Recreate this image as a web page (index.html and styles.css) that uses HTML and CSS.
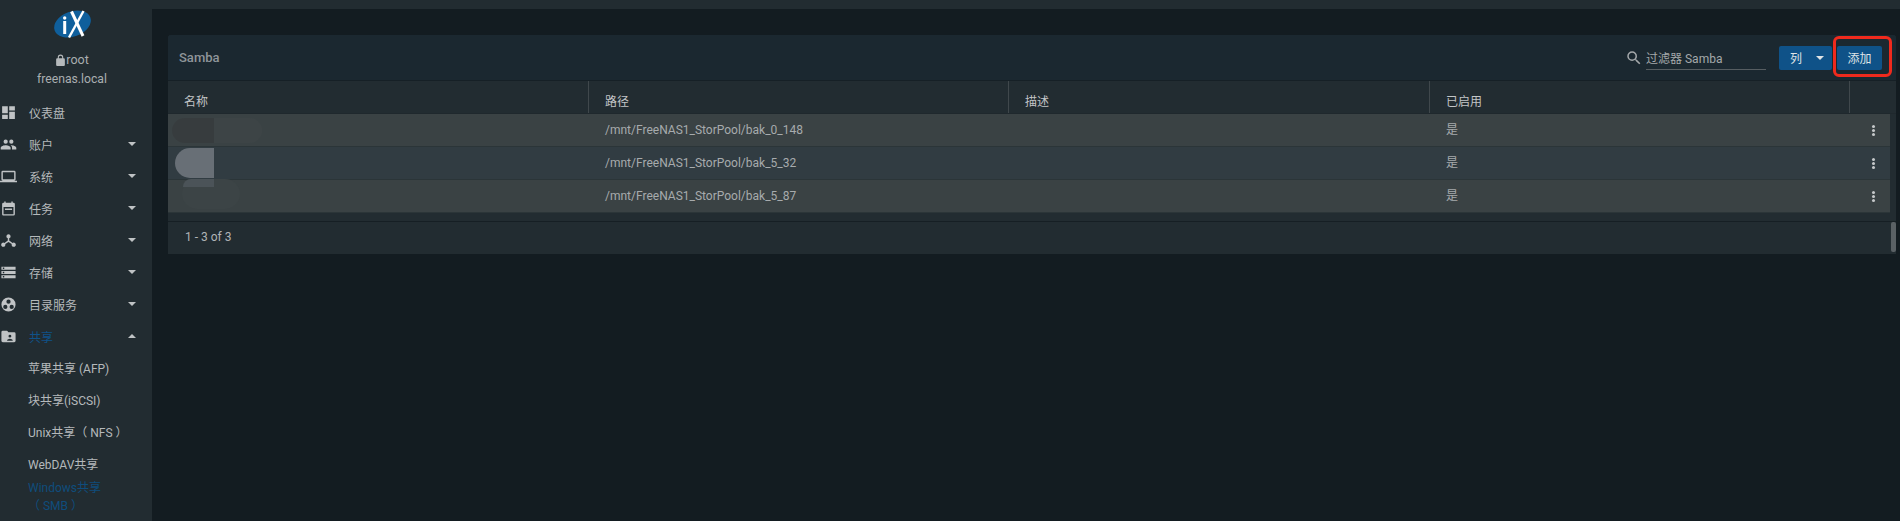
FILE: index.html
```html
<!DOCTYPE html>
<html lang="zh">
<head>
<meta charset="utf-8">
<title>Samba</title>
<link rel="stylesheet" href="styles.css">
</head>
<body>
<div class="app">
  <aside class="sidebar">
    <div class="brand">
      <svg class="logo" viewBox="0 0 37 28" width="37" height="28"><ellipse cx="18.500" cy="14" rx="19" ry="12.500" transform="rotate(-20 18.500 14)" fill="#0f5f9c"/><line x1="17.500" y1="1.500" x2="29" y2="26" stroke="#fff" stroke-width="3"/><line x1="29.500" y1="1" x2="15" y2="27.500" stroke="#fff" stroke-width="2.400"/><rect x="9.200" y="11" width="3" height="13" fill="#fff"/><circle cx="10.700" cy="8" r="1.700" fill="#fff"/></svg>
      <div class="user"><svg viewBox="2 0 20 22" width="11" height="12"><path d="M18 8h-1V6a5 5 0 0 0-10 0v2H6a2 2 0 0 0-2 2v10a2 2 0 0 0 2 2h12a2 2 0 0 0 2-2V10a2 2 0 0 0-2-2zM9 6a3 3 0 0 1 6 0v2H9z" fill="#b5b9bb"/></svg><span>root</span></div>
      <div class="host">freenas.local</div>
    </div>
    <nav class="nav">
      <div class="nav-item"><svg viewBox="0 0 24 24" class="ico"><path d="M3 13h8V3H3zm0 8h8v-6H3zm10 0h8V11h-8zm0-18v6h8V3z"/></svg><span class="label">仪表盘</span></div>
      <div class="nav-item"><svg viewBox="0 0 24 24" class="ico"><path d="M16 11a3 3 0 1 0 0-6 3 3 0 0 0 0 6zm-8 0a3 3 0 1 0 0-6 3 3 0 0 0 0 6zm0 2c-2.300 0-7 1.200-7 3.500V19h14v-2.500C15 14.200 10.300 13 8 13zm8 0h-1c1.200.8 2 2 2 3.500V19h6v-2.500c0-2.300-4.700-3.500-7-3.500z"/></svg><span class="label">账户</span><i class="caret"></i></div>
      <div class="nav-item"><svg viewBox="0 0 24 24" class="ico"><path d="M20 18a2 2 0 0 0 2-2V6a2 2 0 0 0-2-2H4a2 2 0 0 0-2 2v10c0 1.100.9 2 2 2H0v2h24v-2zM4 6h16v10H4z"/></svg><span class="label">系统</span><i class="caret"></i></div>
      <div class="nav-item"><svg viewBox="0 0 24 24" class="ico"><path d="M19 4h-1V2h-2v2H8V2H6v2H5a2 2 0 0 0-2 2v14c0 1.100.9 2 2 2h14a2 2 0 0 0 2-2V6a2 2 0 0 0-2-2zm0 16H5V10h14zM7 12h10v2H7z"/></svg><span class="label">任务</span><i class="caret"></i></div>
      <div class="nav-item"><svg viewBox="0 0 24 24" class="ico"><path d="M12 3a3 3 0 0 0-1 5.830V12l-4.700 3.500a3 3 0 1 0 1.200 1.600L12 14l4.500 3.100a3 3 0 1 0 1.200-1.600L13 12V8.830A3 3 0 0 0 12 3z"/></svg><span class="label">网络</span><i class="caret"></i></div>
      <div class="nav-item"><svg viewBox="0 0 24 24" class="ico"><path fill-rule="evenodd" d="M2 20h20v-4H2zm2-3h2v2H4zM2 4v4h20V4zm2 1h2v2H4zM2 14h20v-4H2zm2-3h2v2H4z"/></svg><span class="label">存储</span><i class="caret"></i></div>
      <div class="nav-item"><svg viewBox="0 0 24 24" class="ico"><path fill-rule="evenodd" d="M12 2a10 10 0 1 0 0 20 10 10 0 0 0 0-20zM12 5a3 3 0 1 1 0 6 3 3 0 0 1 0-6zM7.500 12.500a3 3 0 1 1 0 6 3 3 0 0 1 0-6zm9 0a3 3 0 1 1 0 6 3 3 0 0 1 0-6z"/></svg><span class="label">目录服务</span><i class="caret"></i></div>
      <div class="nav-item active"><svg viewBox="0 0 24 24" class="ico"><path fill-rule="evenodd" d="M20 6h-8l-2-2H4a2 2 0 0 0-2 2v12c0 1.100.9 2 2 2h16a2 2 0 0 0 2-2V8a2 2 0 0 0-2-2zM14 9.500a2 2 0 1 1 0 4 2 2 0 0 1 0-4zM10 17.500c0-1.500 2.600-2.500 4-2.500s4 1 4 2.500V18h-8z"/></svg><span class="label">共享</span><i class="caret up"></i></div>
      <div class="sub">苹果共享 (AFP)</div>
      <div class="sub">块共享(iSCSI)</div>
      <div class="sub">Unix共享（ NFS ）</div>
      <div class="sub">WebDAV共享</div>
      <div class="sub current">Windows共享（ SMB ）</div>
    </nav>
  </aside>
  <main class="main">
    <div class="topbar"></div>
    <section class="card">
      <header class="card-head">
        <span class="title">Samba</span>
        <div class="tools">
          <svg viewBox="0 0 24 24" class="search"><path d="M15.500 14h-.79l-.28-.27A6.470 6.470 0 0 0 16 9.500 6.500 6.500 0 1 0 9.500 16c1.610 0 3.090-.59 4.230-1.570l.27.28v.79l5 4.990L20.490 19l-4.990-5zm-6 0C7.010 14 5 11.990 5 9.500S7.010 5 9.500 5 14 7.010 14 9.500 11.990 14 9.500 14z"/></svg>
          <div class="filter">过滤器 Samba</div>
          <div class="btn btn-col"><span>列</span><i class="caret"></i></div>
          <div class="btn btn-add">添加</div>
        </div>
      </header>
      <div class="table">
        <div class="row head"><div class="cell c1">名称</div><div class="cell c2">路径</div><div class="cell c3">描述</div><div class="cell c4">已启用</div><div class="cell c5"></div></div>
        <div class="row data odd"><div class="cell c1"></div><div class="cell c2">/mnt/FreeNAS1_StorPool/bak_0_148</div><div class="cell c3"></div><div class="cell c4">是</div><div class="cell c5"><i class="dots"></i></div></div>
        <div class="row data even"><div class="cell c1"></div><div class="cell c2">/mnt/FreeNAS1_StorPool/bak_5_32</div><div class="cell c3"></div><div class="cell c4">是</div><div class="cell c5"><i class="dots"></i></div></div>
        <div class="row data odd"><div class="cell c1"></div><div class="cell c2">/mnt/FreeNAS1_StorPool/bak_5_87</div><div class="cell c3"></div><div class="cell c4">是</div><div class="cell c5"><i class="dots"></i></div></div>
        <i class="smear s1"></i><i class="smear s4"></i><i class="smear s2"></i><i class="smear s3"></i>
      </div>
      <footer class="card-foot">1 - 3 of 3</footer>
      <i class="thumb"></i>
    </section>
  </main>
</div>
</body>
</html>
```
FILE: styles.css
```css
* { box-sizing: border-box; }
html, body { margin: 0; height: 100%; overflow: hidden; }
body { font-family: Roboto, "Noto Sans CJK SC", sans-serif; font-size: 12px; color: #b5b9bb; background: #131c21; }
.app { display: flex; height: 521px; }
.sidebar { width: 152px; flex: none; background: #222c31; overflow: hidden; }
.brand { display: flex; flex-direction: column; align-items: center; width: 144px; padding-top: 10px; }
.logo { display: block; margin-bottom: 13px; overflow: visible; }
.user { display: flex; align-items: flex-end; height: 18px; line-height: 18px; font-size: 12.500px; color: #a9aeb0; }
.user svg { margin-bottom: 3px; }
.host { height: 18px; line-height: 18px; font-size: 12.200px; margin-top: 1px; color: #a9aeb0; }
.nav { margin-top: 8px; }
.nav-item { display: flex; align-items: center; height: 32px; position: relative; color: #b5b9bb; }
.ico { width: 17px; height: 17px; fill: #c0c3c5; flex: none; }
.label { margin-left: 12px; font-size: 12px; }
.caret { display: block; width: 0; height: 0; border-left: 4px solid transparent; border-right: 4px solid transparent; border-top: 4px solid #c0c3c5; }
.nav-item .caret { margin-left: auto; margin-right: 16px; }
.caret.up { border-top: 0; border-bottom: 4px solid #c0c3c5; }
.active .label { color: #0f5288; }
.sub { height: 32px; line-height: 34px; padding-left: 28px; font-size: 12px; white-space: nowrap; }
.sub.current { width: 112px; height: auto; margin-top: -1px; line-height: 18px; white-space: normal; color: #0f4c7c; }
.main { flex: 1; min-width: 0; }
.topbar { height: 9px; background: #222c31; }
.card { position: relative; margin: 26px 0 0 16px; width: 1728px; height: 219px; display: flex; flex-direction: column; border-radius: 3px 3px 0 0; overflow: hidden; background: #222c31; }
.card-head { height: 46px; flex: none; display: flex; align-items: center; justify-content: space-between; padding: 0 14px 0 11px; background: #1b2830; border-bottom: 1px solid #162026; }
.title { font-size: 13px; font-weight: 500; color: #8f9599; }
.tools { display: flex; align-items: center; }
.search { width: 18px; height: 18px; fill: #a4a8aa; margin-right: 3px; }
.filter { width: 120px; height: 24px; line-height: 26px; margin-right: 13px; font-size: 12px; color: #a4a8aa; border-bottom: 1px solid #565d61; }
.btn { height: 24px; display: flex; align-items: center; justify-content: center; border-radius: 2px; color: #dfe3e6; background: #0f5288; font-size: 12px; }
.btn-col { width: 53px; gap: 14px; padding-left: 3px; margin-right: 5px; }
.btn-col .caret { border-top-color: #e0e4e6; }
.btn-add { position: relative; width: 45px; }
.btn-add::after { content: ""; position: absolute; inset: -10px -10px -7px -4px; border: 3px solid #f02a1d; border-radius: 6px; }
.table { position: relative; flex: none; height: 140px; padding-right: 6px; background: #222c31; }
.row { display: flex; }
.cell { padding-left: 16px; }
.c1 { width: 420px; } .c2 { width: 420px; } .c3 { width: 421px; } .c4 { width: 420px; } .c5 { flex: 1; padding-left: 0; }
.head { height: 33px; margin-right: -6px; border-bottom: 1px solid #1f282d; color: #c2c5c7; }
.head .cell { padding-top: 6px; line-height: 31px; height: 32px; }
.head .cell + .cell { border-left: 1px solid #40484c; }
.head .c5 { padding-left: 0; }
.data { height: 33px; line-height: 32px; border-bottom: 1px solid #2b3538; color: #a7abad; }
.data .cell { padding-left: 17px; }
.data .c1 { padding-left: 16px; }
.data .c5 { padding-left: 0; position: relative; }
.odd { background: #3a4244; }
.even { background: #313c42; }
.dots { position: absolute; top: 11px; right: 15px; width: 3px; height: 3px; border-radius: 50%; background: #c5c8ca; box-shadow: 0 4px 0 #c5c8ca, 0 8px 0 #c5c8ca; }
.smear { position: absolute; display: block; }
.s1 { left: 4px; top: 37px; width: 90px; height: 25px; border-radius: 13px; background: linear-gradient(90deg, #373c3e 42px, #3d4446 42px); }
.s2 { left: 7px; top: 67px; width: 39px; height: 30px; border-radius: 15px 0 0 15px; background: #686f76; }
.s3 { left: 15px; top: 98px; width: 31px; height: 8px; border-radius: 12px 0 0 0; background: #4b5358; }
.s4 { left: 14px; top: 98px; width: 58px; height: 30px; border-radius: 15px; background: #3c4446; }
.card-foot { height: 33px; line-height: 31px; padding-left: 17px; border-top: 1px solid #161f24; font-size: 12px; color: #b0b4b6; background: #222c31; }
.thumb { position: absolute; top: 187px; right: 0; width: 5px; height: 30px; border-radius: 2px; background: #5a6165; }
```
